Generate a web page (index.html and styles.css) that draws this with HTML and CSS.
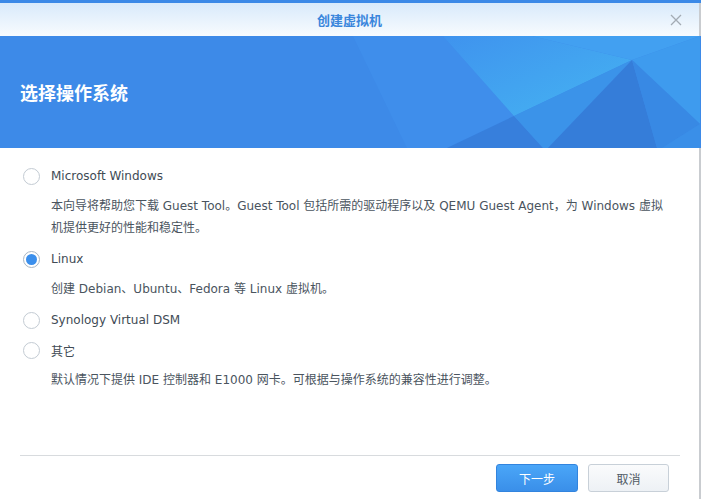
FILE: index.html
```html
<!DOCTYPE html>
<html lang="zh-CN">
<head>
    <meta charset="UTF-8">
    <title>创建虚拟机</title>
    <link rel="stylesheet" href="styles.css">
</head>
<body>
    <div class="dialog">
        <div class="titlebar">
            <span class="title">创建虚拟机</span>
            <button class="close" aria-label="关闭">
                <svg width="12" height="12" viewBox="0 0 12 12"><path d="M1 1 L11 11 M11 1 L1 11" stroke="#a3abb3" stroke-width="1.3" fill="none"/></svg>
            </button>
        </div>
        <div class="banner">
            <svg class="banner-art" width="700" height="112" viewBox="0 0 700 112">
                <defs>
                    <linearGradient id="glow" x1="0" y1="0" x2="1" y2="1">
                        <stop offset="0" stop-color="#3f93ee"/>
                        <stop offset="1" stop-color="#45b4f2"/>
                    </linearGradient>
                </defs>
                <polygon points="353,0 443,0 514,80 447,112 407,112" fill="#3f8eeb"/>
                <polygon points="443,0 532,0 632,24 514,80" fill="url(#glow)"/>
                <polygon points="532,0 700,0 632,24" fill="#42a0f1"/>
                <polygon points="447,112 514,80 543,112" fill="#377fdc"/>
                <polygon points="514,80 632,24 548,112 543,112" fill="#3b93e9"/>
                <polygon points="632,24 548,112 657,112" fill="#357dd9"/>
                <polygon points="632,24 700,0 700,88" fill="#3e9bee"/>
                <polygon points="632,24 700,88 662,112 657,112" fill="#3889e4"/>
                <polygon points="700,88 700,112 662,112" fill="#3a8fe8"/>
            </svg>
            <h1 class="banner-title">选择操作系统</h1>
        </div>
        <div class="content">
            <label class="option"><span class="radio"></span>Microsoft Windows</label>
            <p class="desc">本向导将帮助您下载 Guest Tool。Guest Tool 包括所需的驱动程序以及 QEMU Guest Agent，为 Windows 虚拟机提供更好的性能和稳定性。</p>
            <label class="option"><span class="radio checked"></span>Linux</label>
            <p class="desc">创建 Debian、Ubuntu、Fedora 等 Linux 虚拟机。</p>
            <label class="option"><span class="radio"></span>Synology Virtual DSM</label>
            <label class="option"><span class="radio"></span>其它</label>
            <p class="desc">默认情况下提供 IDE 控制器和 E1000 网卡。可根据与操作系统的兼容性进行调整。</p>
        </div>
        <div class="footer">
            <button class="btn btn-primary">下一步</button>
            <button class="btn">取消</button>
        </div>
    </div>
</body>
</html>
```

FILE: styles.css
```css
body {
    margin: 0;
    font-family: "DejaVu Sans", "Noto Sans CJK SC", sans-serif;
    font-size: 12px;
    color: #414b55;
    background: #fff;
}
.dialog {
    display: flex;
    flex-direction: column;
    width: 701px;
    height: 499px;
    border-top: 3px solid #3b89e7;
    box-sizing: border-box;
}
.titlebar {
    position: relative;
    display: flex;
    align-items: center;
    justify-content: center;
    height: 33px;
    background: linear-gradient(#d8eafb, #f8fbfe);
    border-right: 2px solid #c9ccd0;
}
.title {
    font-family: "Noto Sans CJK SC", sans-serif;
    font-size: 13px;
    font-weight: bold;
    color: #3a86dc;
}
.close {
    position: absolute;
    right: 16px;
    top: 10px;
    width: 14px;
    height: 14px;
    padding: 0;
    border: none;
    background: none;
    display: flex;
    align-items: center;
    justify-content: center;
}
.banner {
    position: relative;
    height: 112px;
    background: #3d8ae8;
    display: flex;
    align-items: center;
    overflow: hidden;
}
.banner-art {
    position: absolute;
    left: 0;
    top: 0;
}
.banner-title {
    position: relative;
    margin: 0 0 0 20px;
    font-family: "Noto Sans CJK SC", sans-serif;
    font-size: 18px;
    font-weight: bold;
    color: #fff;
}
.content {
    flex: 1;
    padding: 13px 20px 0 23px;
    border-right: 2px solid #c9ccd0;
}
.option {
    display: flex;
    align-items: center;
    height: 30px;
    gap: 11px;
    font-size: 12px;
    color: #414b55;
}
.radio {
    width: 15px;
    height: 15px;
    border: 1px solid #c3cbd3;
    border-radius: 50%;
    background: #fff;
    display: flex;
    align-items: center;
    justify-content: center;
}
.radio.checked {
    border-color: #a9b6c3;
}
.radio.checked::after {
    content: "";
    width: 11px;
    height: 11px;
    border-radius: 50%;
    background: #3b8fec;
}
.desc {
    margin: 4px 0 5px 28px;
    max-width: 620px;
    line-height: 22px;
    color: #4a545e;
}
.footer {
    display: flex;
    justify-content: flex-end;
    gap: 10px;
    margin: 0 21px 0 20px;
    padding: 8px 11px 7px 0;
    border-top: 1px solid #d8dbde;
    position: relative;
}
.footer::after {
    content: "";
    position: absolute;
    right: -21px;
    top: -1px;
    bottom: 0;
    border-right: 2px solid #c9ccd0;
}
.btn {
    width: 81px;
    height: 28px;
    border: 1px solid #c8d0d8;
    border-radius: 3px;
    background: linear-gradient(#fafbfc, #edf1f5);
    font-family: "Noto Sans CJK SC", sans-serif;
    font-size: 12px;
    color: #505a64;
}
.btn-primary {
    width: 82px;
    border-color: #3284de;
    background: linear-gradient(#4aa6f8, #3a8fe9);
    color: #fff;
}
```
